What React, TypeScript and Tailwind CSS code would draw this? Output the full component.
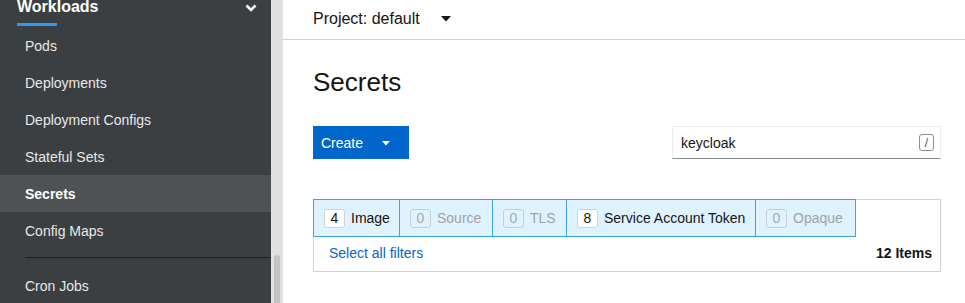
import React from "react";

const font = { fontFamily: '"Liberation Sans", Arial, sans-serif' };

function NavItem({ label, active }: { label: string; active?: boolean }) {
  return (
    <div
      className={
        "h-[37px] flex items-center pt-[2px] pl-[25px] text-[14px] " +
        (active ? "bg-[#4f5255] text-white font-bold" : "text-[#e8e8e8]")
      }
    >
      {label}
    </div>
  );
}

function Tab({
  n,
  label,
  disabled,
  first,
  w,
}: {
  n: number;
  label: string;
  disabled?: boolean;
  first?: boolean;
  w: string;
}) {
  return (
    <div
      className={
        "h-[38px] flex items-center pl-[10px] border border-[#3ba3dd] bg-[#def3ff] " +
        w +
        (first ? "" : " -ml-px")
      }
    >
      <span
        className={
          "h-[19px] min-w-[21px] px-[5px] flex items-center justify-center rounded-[3px] border text-[14px] " +
          (disabled ? "border-[#c8cfd4] text-[#a8aaad]" : "border-[#d2d2d2] bg-white text-[#151515]")
        }
      >
        {n}
      </span>
      <span className={"ml-[6px] text-[14px] " + (disabled ? "text-[#a0a3a6]" : "text-[#151515]")}>{label}</span>
    </div>
  );
}

export default function App() {
  return (
    <div className="w-[965px] h-[303px] flex overflow-hidden bg-white" style={font}>
      {/* Sidebar */}
      <div className="w-[271px] h-full bg-[#3c3f42] flex flex-col">
        <div className="relative">
          <div className="-mt-[3px] ml-[17px] leading-[20px] text-[16px] font-bold text-white">Workloads</div>
          <svg className="absolute left-[245px] top-[4px]" width="12" height="8" viewBox="0 0 12 8">
            <path d="M1.5 1.5 L6 6 L10.5 1.5" fill="none" stroke="white" strokeWidth="2.6" />
          </svg>
          <div className="mt-[6px] ml-[17px] w-[40px] h-[3px] bg-[#2b9af3]" />
        </div>
        <div className="mt-[1px] flex flex-col">
          <NavItem label="Pods" />
          <NavItem label="Deployments" />
          <NavItem label="Deployment Configs" />
          <NavItem label="Stateful Sets" />
          <NavItem label="Secrets" active />
          <NavItem label="Config Maps" />
          <div className="mt-[8px] ml-[25px] h-px bg-[#1e2023]" />
          <div className="mt-[9px]">
            <NavItem label="Cron Jobs" />
          </div>
        </div>
      </div>
      {/* Scrollbar */}
      <div className="w-[12px] h-full bg-[#e0e0e0] flex flex-col">
        <div className="mt-[255px] ml-[3px] w-[6px] flex-1 rounded-t-[3px] bg-[#c3c3c3]" />
      </div>
      {/* Main */}
      <div className="flex-1 h-full flex flex-col text-[#151515]">
        <div className="h-[40px] border-b border-[#d2d2d2] flex items-center pl-[30px] pb-[1px]">
          <span className="text-[16px]">Project: default</span>
          <svg className="ml-[21px]" width="10" height="6" viewBox="0 0 10 6">
            <path d="M0 0 L10 0 L5 5.5 Z" fill="#151515" />
          </svg>
        </div>
        <div className="pl-[30px] pr-[24px]">
          <h1 className="mt-[26px] text-[26px] leading-[32px]">Secrets</h1>
          <div className="mt-[28px] flex items-center justify-between">
            <div className="w-[96px] h-[33px] bg-[#0066cc] flex items-center pl-[8px] pt-[1px] text-white text-[14px]">
              <span>Create</span>
              <svg className="ml-[19px]" width="8" height="5" viewBox="0 0 8 5">
                <path d="M0 0 L8 0 L4 4.5 Z" fill="white" />
              </svg>
            </div>
            <div className="w-[269px] h-[33px] border border-[#ededed] border-b-[#8a8d90] flex items-center pl-[8px] pr-[6px] justify-between">
              <span className="text-[14px] pt-[1px]">keycloak</span>
              <span className="w-[15px] h-[17px] border border-[#8a8d90] rounded-[3px] flex items-center justify-center text-[12px] text-[#4f5255]">/</span>
            </div>
          </div>
          <div className="mt-[40px] h-[73px] border border-[#d2d2d2] flex flex-col">
            <div className="flex -mt-px -ml-px">
              <Tab n={4} label="Image" first w="w-[87px]" />
              <Tab n={0} label="Source" disabled w="w-[94px]" />
              <Tab n={0} label="TLS" disabled w="w-[75px]" />
              <Tab n={8} label="Service Account Token" w="w-[190px]" />
              <Tab n={0} label="Opaque" disabled w="w-[101px]" />
            </div>
            <div className="flex-1 flex items-center justify-between pl-[15px] pr-[8px] pb-[1px]">
              <span className="text-[14px] text-[#0066cc]">Select all filters</span>
              <span className="text-[14px] font-bold">12 Items</span>
            </div>
          </div>
        </div>
      </div>
    </div>
  );
}
